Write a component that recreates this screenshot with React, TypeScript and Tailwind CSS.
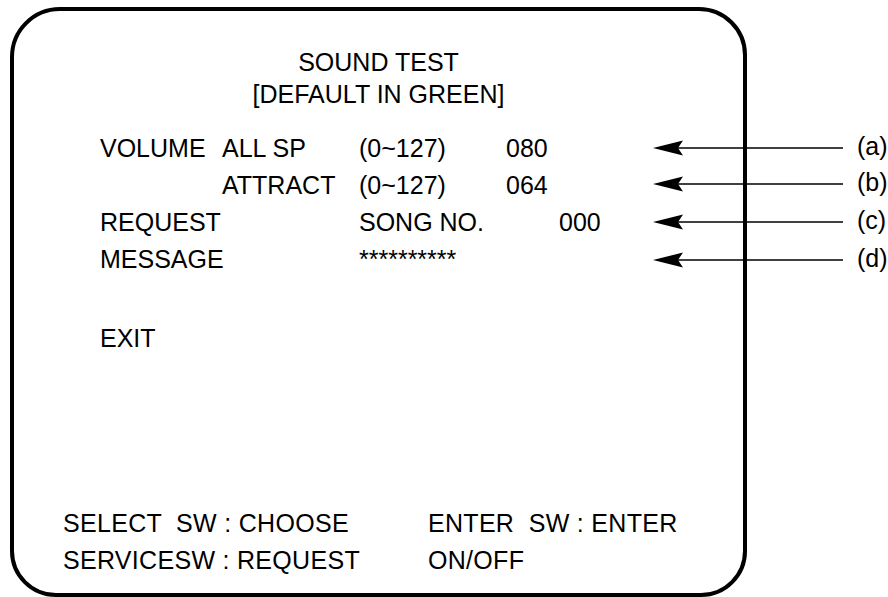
const Arrow = ({ label, className }: { label: string; className: string }) => (
  <div className={`flex items-center h-[32px] ${className}`}>
    <svg width="190" height="16" viewBox="0 0 190 16" className="shrink-0">
      <polygon points="0,8 30,0.5 25,8 30,15.5" fill="#000" />
      <line x1="24" y1="8" x2="190" y2="8" stroke="#000" strokeWidth="1.4" />
    </svg>
    <span className="ml-[14px] -mt-[4px] text-[25px] leading-[32px]">{label}</span>
  </div>
);

const App = () => {
  return (
    <div className="relative w-[888px] h-[597px] bg-white text-black overflow-hidden font-['Liberation_Sans',Arial,sans-serif]">
      <div className="ml-[10px] pt-[7px]">
        <div className="w-[737px] h-[590px] border-[4.5px] border-black rounded-tl-[50px] rounded-tr-[48px] rounded-b-[46px] flex flex-col">
          <div className="pt-[35px] text-center text-[25px] leading-[32px]">
            <div>SOUND TEST</div>
            <div>[DEFAULT IN GREEN]</div>
          </div>

          <div className="mt-[20px] pl-[86px] text-[25px] leading-[37px]">
            <div className="flex">
              <span className="w-[122px]">VOLUME</span>
              <span className="w-[137px]">ALL SP</span>
              <span className="w-[147px]">(0~127)</span>
              <span>080</span>
            </div>
            <div className="flex">
              <span className="w-[122px]" />
              <span className="w-[137px]">ATTRACT</span>
              <span className="w-[147px]">(0~127)</span>
              <span>064</span>
            </div>
            <div className="flex">
              <span className="w-[259px]">REQUEST</span>
              <span className="w-[200px]">SONG NO.</span>
              <span>000</span>
            </div>
            <div className="flex">
              <span className="w-[259px]">MESSAGE</span>
              <span>**********</span>
            </div>
            <div className="mt-[42px]">EXIT</div>
          </div>

          <div className="mt-auto pb-[14px] pl-[49px] text-[25px] leading-[37px] tracking-[0.3px] whitespace-pre">
            <div className="flex">
              <span className="w-[365px]">SELECT  SW : CHOOSE</span>
              <span>ENTER  SW : ENTER</span>
            </div>
            <div className="flex">
              <span className="w-[365px]">SERVICESW : REQUEST</span>
              <span>ON/OFF</span>
            </div>
          </div>
        </div>
      </div>

      <div className="absolute left-[653px] top-[132px] flex flex-col">
        <Arrow label="(a)" className="" />
        <Arrow label="(b)" className="mt-[4px]" />
        <Arrow label="(c)" className="mt-[6px]" />
        <Arrow label="(d)" className="mt-[6px]" />
      </div>
    </div>
  );
};

export default App;
